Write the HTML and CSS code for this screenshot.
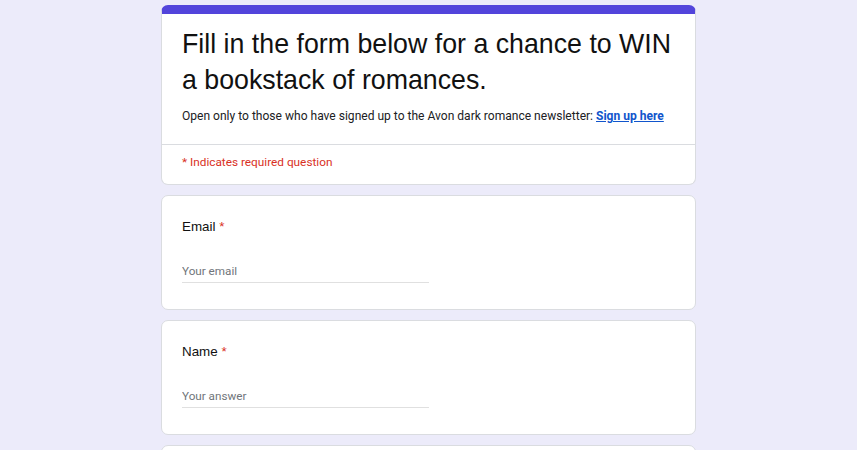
FILE: index.html
```html
<!DOCTYPE html>
<html lang="en">
<head>
<meta charset="utf-8">
<title>Win a bookstack of romances</title>
<link rel="stylesheet" href="styles.css">
</head>
<body>
<main class="form">
  <section class="card header-card">
    <div class="header-main">
      <h1 class="form-title">Fill in the form below for a chance to WIN a bookstack of romances.</h1>
      <p class="form-desc">Open only to those who have signed up to the Avon dark romance newsletter: <a class="desc-link" href="#">Sign up here</a></p>
    </div>
    <div class="required-note">* Indicates required question</div>
  </section>

  <section class="card question">
    <div class="q-label">Email <span class="star">*</span></div>
    <input class="q-input" type="text" placeholder="Your email">
  </section>

  <section class="card question">
    <div class="q-label">Name <span class="star">*</span></div>
    <input class="q-input" type="text" placeholder="Your answer">
  </section>

  <section class="card question"></section>
</main>
</body>
</html>
```

FILE: styles.css
```css
html, body {
  margin: 0;
  padding: 0;
  background: #ecebfa;
}

body {
  padding-top: 5px;
  font-family: Roboto, "Liberation Sans", Arial, sans-serif;
  color: #202124;
}

.form {
  width: 535px;
  margin: 0 auto;
  display: flex;
  flex-direction: column;
  gap: 10px;
}

.card {
  background: #ffffff;
  border: 1px solid #dadce0;
  border-radius: 7px;
  box-sizing: border-box;
}

.header-card {
  border-top: 9px solid #5244db;
}

.header-main {
  padding: 12px 20px 19px 20px;
  border-bottom: 1px solid #dadce0;
}

.form-title {
  margin: 0;
  font-family: "Liberation Sans", Arial, sans-serif;
  font-weight: 400;
  font-size: 26.75px;
  line-height: 36px;
  color: #111111;
}

.form-desc {
  margin: 10px 0 0 0;
  font-family: Roboto, sans-serif;
  font-size: 12.05px;
  line-height: 17px;
  color: #202124;
}

.desc-link {
  color: #1155cc;
  font-weight: 700;
  text-decoration: underline;
}

.required-note {
  padding: 9px 20px 13px 20px;
  font-family: Roboto, sans-serif;
  font-size: 11.8px;
  line-height: 17px;
  color: #d93025;
}

.question {
  height: 115px;
  padding: 21px 20px 0 20px;
  display: flex;
  flex-direction: column;
  align-items: flex-start;
}

.q-label {
  font-family: "Liberation Sans", Arial, sans-serif;
  font-size: 13.4px;
  line-height: 20px;
  color: #111111;
}

.star {
  color: #d93025;
}

.q-input {
  margin-top: 21px;
  width: 50%;
  height: 25px;
  box-sizing: border-box;
  padding: 4px 0 3px 0;
  border: none;
  border-bottom: 1px solid #e0e0e0;
  outline: none;
  background: transparent;
  font-family: Roboto, sans-serif;
  font-size: 11.7px;
  color: #202124;
}

.q-input::placeholder {
  color: #70757a;
  opacity: 1;
}
```
